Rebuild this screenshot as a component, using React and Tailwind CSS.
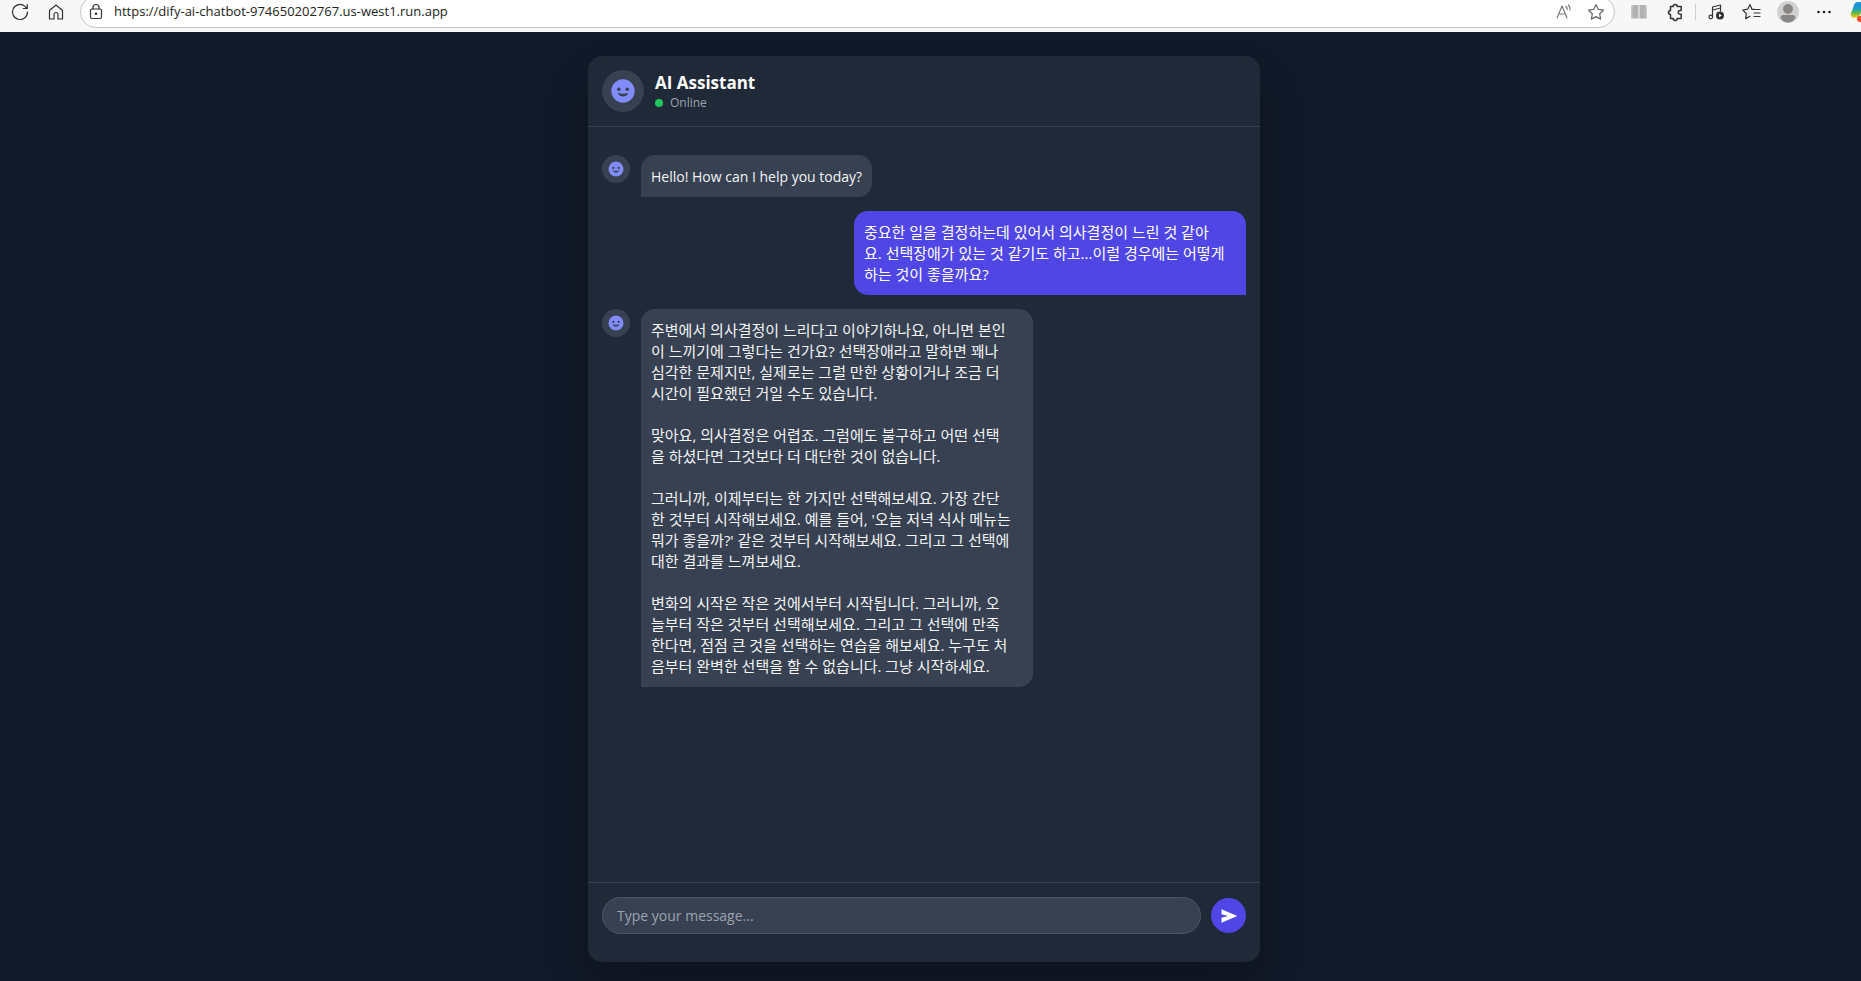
import React from "react";

const ui = "font-['Open_Sans','Noto_Sans_CJK_KR',sans-serif]";

const messages = [
  { from: "bot", text: "Hello! How can I help you today?" },
  {
    from: "user",
    long: true,
    text: `중요한 일을 결정하는데 있어서 의사결정이 느린 것 같아
요. 선택장애가 있는 것 같기도 하고...이럴 경우에는 어떻게
하는 것이 좋을까요?`,
  },
  {
    from: "bot",
    long: true,
    text: `주변에서 의사결정이 느리다고 이야기하나요, 아니면 본인
이 느끼기에 그렇다는 건가요? 선택장애라고 말하면 꽤나
심각한 문제지만, 실제로는 그럴 만한 상황이거나 조금 더
시간이 필요했던 거일 수도 있습니다.

맞아요, 의사결정은 어렵죠. 그럼에도 불구하고 어떤 선택
을 하셨다면 그것보다 더 대단한 것이 없습니다.

그러니까, 이제부터는 한 가지만 선택해보세요. 가장 간단
한 것부터 시작해보세요. 예를 들어, '오늘 저녁 식사 메뉴는
뭐가 좋을까?' 같은 것부터 시작해보세요. 그리고 그 선택에
대한 결과를 느껴보세요.

변화의 시작은 작은 것에서부터 시작됩니다. 그러니까, 오
늘부터 작은 것부터 선택해보세요. 그리고 그 선택에 만족
한다면, 점점 큰 것을 선택하는 연습을 해보세요. 누구도 처
음부터 완벽한 선택을 할 수 없습니다. 그냥 시작하세요.`,
  },
];

function Face({ className }) {
  return (
    <svg viewBox="0 0 24 24" className={className} aria-hidden="true">
      <circle cx="12" cy="12" r="10" fill="#818cf8" />
      <circle cx="8.4" cy="10.6" r="1.5" fill="#374151" />
      <circle cx="15.6" cy="10.6" r="1.5" fill="#374151" />
      <path d="M7.5 13.500q4.500 1.600 9 0c-.6 2.100-2.300 3.300-4.500 3.300s-3.900-1.200-4.500-3.300z" fill="#374151" />
    </svg>
  );
}

const bubble = "whitespace-pre-line rounded-[14px] px-[10px] pb-[10px] pt-[11px] leading-[21px]";

function Message({ from, text, long }) {
  const size = long ? "w-[392px] text-[15px]" : "max-w-[392px] text-[14px]";
  if (from === "user") {
    return (
      <li className="flex justify-end">
        <p className={`${bubble} ${size} rounded-br-none bg-[#4f46e5] text-white`}>{text}</p>
      </li>
    );
  }
  return (
    <li className="flex items-start gap-[11px]">
      <span className="flex size-7 shrink-0 items-center justify-center rounded-full bg-[#374151]">
        <Face className="size-[18px]" />
      </span>
      <p className={`${bubble} ${size} rounded-bl-none bg-[#374151] text-[#f3f4f6]`}>{text}</p>
    </li>
  );
}

function Tool({ label, children }) {
  return (
    <button type="button" aria-label={label} className="flex size-6 shrink-0 items-center justify-center text-[#333]">
      {children}
    </button>
  );
}

const line = { fill: "none", stroke: "currentColor", strokeWidth: 1.2, strokeLinecap: "round", strokeLinejoin: "round" };
const star = "M10 2.500l2.300 4.900 5.200.7-3.800 3.700.9 5.300-4.600-2.500-4.600 2.500.9-5.300L2.500 8.100l5.200-.7z";

function BrowserBar() {
  return (
    <header className="flex h-8 shrink-0 items-start overflow-hidden bg-[#f7f7f7] pl-2">
      <div className="flex w-[72px] shrink-0 gap-3">
        <Tool label="Refresh">
          <svg viewBox="0 0 20 20" className="size-5" {...line}>
            <path d="M17.500 10a7.500 7.500 0 1 1-2.500-5.600L17 6.500M17.300 2.500v4h-4" />
          </svg>
        </Tool>
        <Tool label="Home">
          <svg viewBox="0 0 20 20" className="size-5" {...line}>
            <path d="M3.500 8.500L10 3l6.500 5.500V17H12v-4.500a2 2 0 0 0-4 0V17H3.500z" />
          </svg>
        </Tool>
      </div>
      <div className="-mt-1 flex h-8 min-w-0 flex-1 items-center rounded-full border border-[#c8c8c8] bg-white pl-[3px] pr-[6px]">
        <Tool label="Site information">
          <svg viewBox="0 0 20 20" className="size-5" {...line}>
            <rect x="4.500" y="7" width="11" height="9.500" rx="1.500" />
            <path d="M7 7V5.500a3 3 0 0 1 6 0V7" />
            <circle cx="10" cy="11.700" r=".6" fill="currentColor" />
          </svg>
        </Tool>
        <input
          aria-label="Address"
          readOnly
          value="https://dify-ai-chatbot-974650202767.us-west1.run.app"
          className="ml-[6px] min-w-0 flex-1 bg-transparent text-[13px] text-[#222] outline-none"
        />
        <div className="flex gap-2">
          <Tool label="Read aloud">
            <svg viewBox="0 0 20 20" className="size-5 text-[#777]" {...line}>
              <path d="M3 16L8 4l5 12M4.700 12h6.600M12 4.500c1 1 1.200 2 1.200 3M14.500 3c1.300 1.500 1.700 3 1.600 5" />
            </svg>
          </Tool>
          <Tool label="Add to favorites">
            <svg viewBox="0 0 20 20" className="size-5 text-[#666]" {...line}>
              <path d={star} />
            </svg>
          </Tool>
        </div>
      </div>
      <div className="flex shrink-0 items-center gap-3 pl-3">
        <Tool label="Reader">
          <svg viewBox="0 0 20 20" className="size-5">
            <path d="M2 3.500h2v13H2zM16 3.500h2v13h-2z" fill="#c9c9c9" />
            <path d="M3.500 3h6v13.500h-6zM10.500 3h6v13.500h-6z" fill="#b3b3b3" />
          </svg>
        </Tool>
        <div className="flex items-center gap-2">
          <Tool label="Extensions">
            <svg viewBox="0 0 20 20" className="size-5" {...line} strokeWidth="1.500">
              <path d="M5.500 4.500h2.700a2 2 0 0 1 4 0h4V8.500h-1a1.800 1.800 0 0 0 0 3.800h1V16.500h-4a2 2 0 0 1-4 0H5.500v-4a2 2 0 0 1 0-4z" />
            </svg>
          </Tool>
          <span className="h-4 w-px bg-[#cfcfcf]" />
          <Tool label="Media">
            <svg viewBox="0 0 20 20" className="size-5" {...line}>
              <path d="M6.500 15V5l8-2v6M6.500 8l8-2" />
              <circle cx="4.800" cy="15" r="1.800" />
              <circle cx="14" cy="13.500" r="4" fill="currentColor" stroke="none" />
              <path d="M13 11.700v3.600l2.800-1.800z" fill="#fff" stroke="none" />
            </svg>
          </Tool>
        </div>
        <Tool label="Favorites">
          <svg viewBox="0 0 20 20" className="size-5" {...line}>
            <path d="M12.500 7.400H10L8 2.500 5.700 7.200.8 8l3.600 3.600-.8 5L8 14.300M11.500 7.500H18M12 11h6M12 14.500h6" />
          </svg>
        </Tool>
        <Tool label="Profile">
          <svg viewBox="0 0 22 22" className="size-[22px]">
            <circle cx="11" cy="11" r="11" fill="#d2d0ce" />
            <circle cx="11" cy="8" r="5" fill="#8a8886" />
            <path d="M3.500 17c0-2 1-3 3-3h9c2 0 3 1 3 3-2 3-4.500 4.500-7.500 4.500S5.500 20 3.500 17z" fill="#8a8886" />
          </svg>
        </Tool>
        <Tool label="Settings and more">
          <svg viewBox="0 0 20 20" className="size-5" fill="#222">
            <circle cx="4.500" cy="10" r="1.300" />
            <circle cx="10" cy="10" r="1.300" />
            <circle cx="15.500" cy="10" r="1.300" />
          </svg>
        </Tool>
        <button type="button" aria-label="Copilot" className="flex h-6 w-[13px] overflow-hidden pl-[2px]">
          <svg viewBox="0 0 24 24" className="size-6 shrink-0">
            <defs>
              <linearGradient id="ribbon" x1="0" y1="0" x2="0" y2="1">
                <stop offset="0" stopColor="#1b8fe8" />
                <stop offset=".45" stopColor="#1c9fc4" />
                <stop offset=".7" stopColor="#5fb848" />
                <stop offset="1" stopColor="#f2c80f" />
              </linearGradient>
            </defs>
            <path d="M8 2h7l-5 13c-.5 1.500-1.500 2.500-3 2.500H4c-2.500 0-3.500-1.500-3-4L4 5c.6-2 2-3 4-3z" fill="url(#ribbon)" />
            <path d="M9 16h11l-2 3.500c-.8 1.500-2 2.500-4 2.500h-4c-2 0-2.500-1-3-2.500-.3-1.500.5-3 2-3.500z" fill="#f0502e" />
            <path d="M12 2h5c2 0 3 1 3.500 3l.8 2.500H13z" fill="#1660c9" />
          </svg>
        </button>
      </div>
    </header>
  );
}

export default function App() {
  return (
    <div className={`flex h-screen flex-col overflow-hidden bg-[#111827] ${ui}`}>
      <BrowserBar />
      <main className="flex min-h-0 flex-1 justify-center pb-[19px] pr-[13px] pt-6">
        <section className="flex w-full max-w-2xl flex-col overflow-hidden rounded-[14px] bg-[#1f2937] shadow-2xl">
          <header className="flex items-center gap-[11px] border-b border-[#374151] p-[14px]">
            <span className="flex size-[42px] items-center justify-center rounded-full bg-[#374151]">
              <Face className="size-7" />
            </span>
            <div>
              <h1 className="text-[17px] font-bold leading-6 text-white">AI Assistant</h1>
              <p className="flex items-center gap-[7px] text-[12px] leading-4 text-[#9ca3af]">
                <span className="size-2 rounded-full bg-[#22c55e]" />
                Online
              </p>
            </div>
          </header>
          <ul className="flex min-h-0 flex-1 flex-col gap-[14px] overflow-hidden px-[14px] py-7">
            {messages.map((m, i) => (
              <Message key={i} {...m} />
            ))}
          </ul>
          <form
            className="flex items-center gap-[10px] border-t border-[#374151] px-[14px] pb-7 pt-[14px]"
            onSubmit={(e) => e.preventDefault()}
          >
            <input
              aria-label="Message"
              placeholder="Type your message..."
              className="h-[37px] min-w-0 flex-1 rounded-full border border-[#4b5563] bg-[#374151] px-[14px] text-[14px] text-white outline-none placeholder:text-[#9ca3af]"
            />
            <button
              type="submit"
              aria-label="Send"
              className="flex size-[35px] items-center justify-center rounded-full bg-[#4f46e5] text-white"
            >
              <svg viewBox="0 0 24 24" className="size-5" fill="currentColor">
                <path d="M3 20v-6l8-2-8-2V4l19 8z" />
              </svg>
            </button>
          </form>
        </section>
      </main>
    </div>
  );
}
